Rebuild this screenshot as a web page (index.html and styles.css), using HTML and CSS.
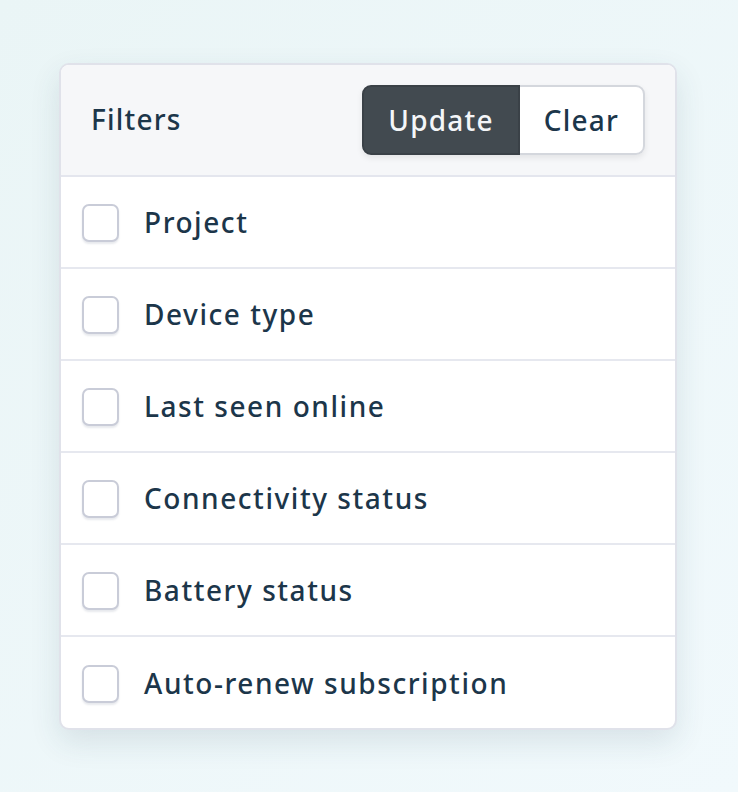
FILE: index.html
```html
<!DOCTYPE html>
<html lang="en">
<head>
    <meta charset="UTF-8">
    <title>Filters</title>
    <link rel="stylesheet" href="styles.css">
</head>
<body>
    <div class="filter-card">
        <div class="filter-header">
            <div class="filter-title">Filters</div>
            <div class="button-group">
                <button class="btn btn-primary">Update</button>
                <button class="btn btn-secondary">Clear</button>
            </div>
        </div>

        <label class="filter-row"><span class="checkbox"></span>Project</label>
        <label class="filter-row"><span class="checkbox"></span>Device type</label>
        <label class="filter-row"><span class="checkbox"></span>Last seen online</label>
        <label class="filter-row"><span class="checkbox"></span>Connectivity status</label>
        <label class="filter-row"><span class="checkbox"></span>Battery status</label>
        <label class="filter-row"><span class="checkbox"></span>Auto-renew subscription</label>
    </div>
</body>
</html>
```

FILE: styles.css
```css
body {
    font-family: 'Noto Sans', 'Open Sans', sans-serif;
    background: linear-gradient(135deg, #eaf5f6 0%, #f1f9fc 100%);
    margin: 0;
    padding: 63px 0 0 0;
    min-height: 100vh;
    box-sizing: border-box;
    color: #1c364a;
}

.filter-card {
    width: 618px;
    margin: 0 0 0 59px;
    background-color: white;
    border: 2px solid #e0e2ea;
    border-radius: 10px;
    box-shadow: 0 12px 30px rgba(40, 70, 90, 0.12);
    overflow: hidden;
    box-sizing: border-box;
}

.filter-header {
    background-color: #f6f7f9;
    height: 112px;
    display: flex;
    align-items: center;
    justify-content: space-between;
    padding: 0 30px 0 30px;
    border-bottom: 2px solid #e4e6ee;
    box-sizing: border-box;
}

.filter-title {
    font-size: 28px;
    font-weight: 500;
    letter-spacing: 1.2px;
    padding-bottom: 2px;
}

.button-group {
    display: flex;
    border-radius: 9px;
    box-shadow: 0 3px 6px rgba(0, 0, 0, 0.08);
}

.btn {
    font-family: 'Noto Sans', 'Open Sans', sans-serif;
    font-size: 28px;
    font-weight: 500;
    letter-spacing: 1.2px;
    height: 70px;
    margin: 0;
    padding: 0;
    cursor: pointer;
    box-sizing: border-box;
}

.btn-primary {
    width: 158px;
    background-color: #424a50;
    color: #f4f6f8;
    border: 2px solid #3a4147;
    border-radius: 9px 0 0 9px;
}

.btn-secondary {
    width: 125px;
    background-color: white;
    color: #1c364a;
    border: 2px solid #d4d7dd;
    border-left: none;
    border-radius: 0 9px 9px 0;
}

.filter-row {
    display: flex;
    align-items: center;
    height: 92px;
    padding-left: 21px;
    font-size: 28px;
    font-weight: 500;
    letter-spacing: 1.55px;
    border-bottom: 2px solid #e6e8ef;
    box-sizing: border-box;
    cursor: pointer;
}

.filter-row:last-child {
    border-bottom: none;
    height: 91px;
}

.checkbox {
    width: 37px;
    height: 38px;
    border: 2px solid #c9ccd8;
    border-radius: 7px;
    background-color: white;
    box-shadow: 0 2px 2px rgba(60, 70, 110, 0.12);
    box-sizing: border-box;
    margin-right: 25px;
    margin-top: 2px;
}
```
